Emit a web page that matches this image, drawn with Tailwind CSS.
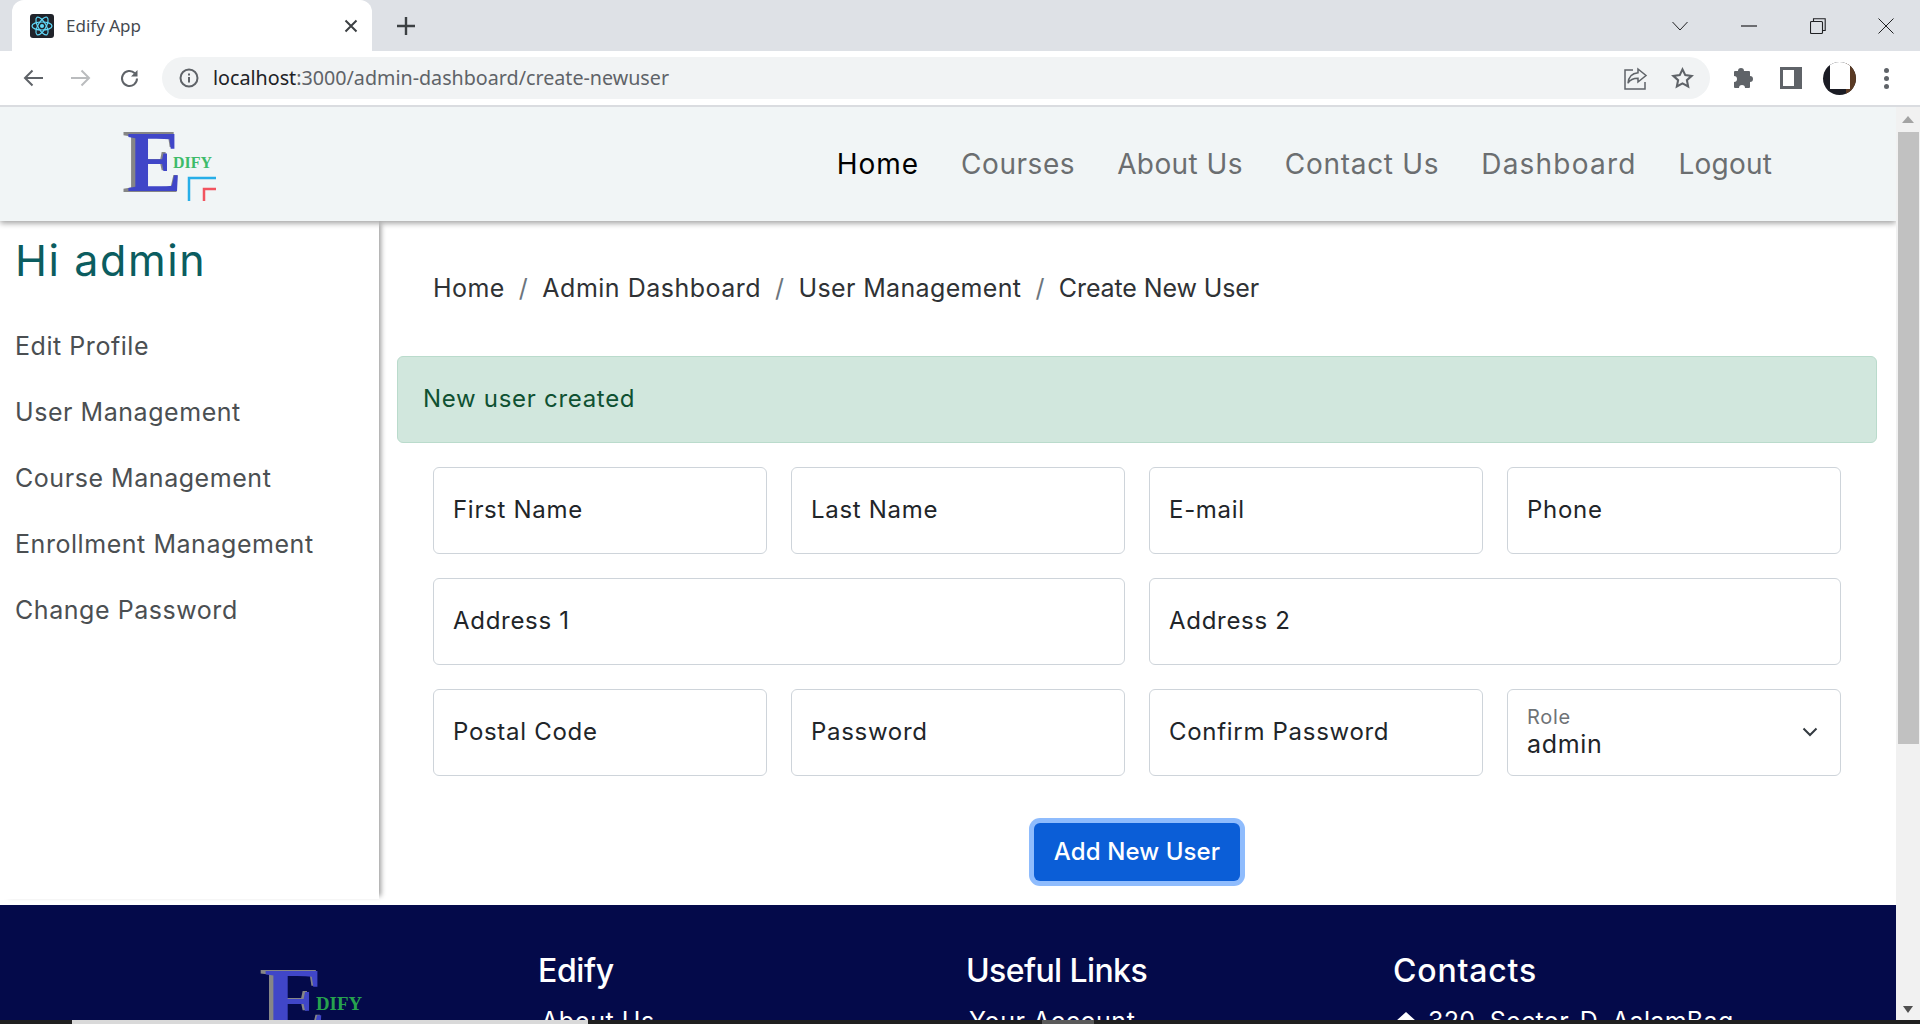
<!DOCTYPE html>
<html>
<head>
<meta charset="utf-8">
<title>Edify App</title>
<script src="https://cdn.jsdelivr.net/npm/@tailwindcss/browser@4"></script>
</head>
<body class="h-[1024px] w-[1920px] overflow-hidden bg-white font-['Inter',sans-serif]">
<div class="flex h-[1024px] flex-col overflow-hidden">
  <!-- Browser tab strip -->
  <div class="flex h-[51px] shrink-0 items-end bg-[#dee1e6] pl-[12px] font-['Noto_Sans',sans-serif]">
    <div class="flex h-[51px] w-[360px] items-center rounded-t-[12px] bg-white pl-[18px] pr-[14px]">
      <svg class="shrink-0" width="24" height="24" viewBox="0 0 24 24"><rect width="24" height="24" rx="3" fill="#20232a"/><g fill="none" stroke="#61dafb" stroke-width="1.2"><ellipse cx="12" cy="12" rx="10" ry="4"/><ellipse cx="12" cy="12" rx="10" ry="4" transform="rotate(60 12 12)"/><ellipse cx="12" cy="12" rx="10" ry="4" transform="rotate(120 12 12)"/></g><circle cx="12" cy="12" r="2" fill="#61dafb"/></svg>
      <span class="ml-[12px] flex-1 text-[17px] text-[#45494f]">Edify App</span>
      <svg width="14" height="14" viewBox="0 0 14 14" stroke="#3c4043" stroke-width="2" fill="none"><path d="M1.5 1.5l11 11M12.5 1.5l-11 11"/></svg>
    </div>
    <div class="flex h-[51px] w-[70px] items-center pl-[25px]">
      <svg width="18" height="18" viewBox="0 0 18 18" stroke="#3c4043" stroke-width="2.4" fill="none"><path d="M9 0v18M0 9h18"/></svg>
    </div>
    <div class="flex-1"></div>
    <div class="flex h-[51px] items-center">
      <div class="flex w-[68px] justify-center"><svg width="16" height="10" viewBox="0 0 16 10" stroke="#202124" fill="none"><path d="M.5 1L8 9l7.5-8"/></svg></div>
      <div class="flex w-[69px] justify-center"><svg width="16" height="2" viewBox="0 0 16 2"><path d="M0 1h16" stroke="#202124" stroke-width="1.2"/></svg></div>
      <div class="flex w-[69px] justify-center"><svg width="16" height="16" viewBox="0 0 16 16" stroke="#202124" stroke-width="1.1" fill="none"><rect x=".5" y="3.5" width="12" height="12" rx="1"/><path d="M3.5 3.5V.8h11.7v11.7h-2.7"/></svg></div>
      <div class="flex w-[68px] justify-center"><svg width="16" height="16" viewBox="0 0 16 16" stroke="#202124" stroke-width="1" fill="none"><path d="M.5.5l15 15M15.5.5l-15 15"/></svg></div>
    </div>
  </div>
  <!-- Browser toolbar -->
  <div class="flex h-[56px] shrink-0 items-center border-b-2 border-[#dadce0] bg-white font-['Noto_Sans',sans-serif]">
    <div class="flex w-[162px] items-center pl-[23px]">
      <svg width="20" height="18" viewBox="0 0 20 18" stroke="#5f6368" stroke-width="2" fill="none"><path d="M20 9H2M9.5 1.5L2 9l7.5 7.5"/></svg>
      <svg class="ml-[28px]" width="20" height="18" viewBox="0 0 20 18" stroke="#babcbe" stroke-width="2" fill="none"><path d="M0 9h18M10.500 1.500L18 9l-7.500 7.500"/></svg>
      <svg class="ml-[28px]" width="21" height="21" viewBox="0 0 21 21" stroke="#5f6368" stroke-width="2" fill="none"><path d="M18 10.500a7.500 7.500 0 1 1-2.200-5.300"/><path d="M18.500 2v6.500H12" fill="#5f6368" stroke="none"/></svg>
    </div>
    <div class="flex h-[42px] w-[1548px] items-center rounded-full bg-[#f1f3f4] pl-[17px]">
      <svg width="20" height="20" viewBox="0 0 20 20" fill="none"><circle cx="10" cy="10" r="8.500" stroke="#5f6368" stroke-width="2"/><path d="M10 9v5.500M10 5.500v2" stroke="#5f6368" stroke-width="2"/></svg>
      <span class="ml-[14px] flex-1 text-[19.700px] text-[#5f6368]"><span class="text-[#202124]">localhost</span>:3000/admin-dashboard/create-newuser</span>
      <svg class="mr-[-3px]" width="24" height="23" viewBox="0 0 24 23" fill="none" stroke="#5f6368" stroke-width="1.500"><path d="M9 3H1v19h20v-7"/><path d="M14 2l8 6.500-8 6.500v-3.800c-5 0-8 1.500-10 5 .5-6 4-10 10-10.500z"/></svg>
      <svg class="ml-[26px] mr-[16px]" width="23" height="22" viewBox="0 0 24 23" fill="none" stroke="#5f6368" stroke-width="2.200"><path d="M12 2.500l2.900 6 6.600.8-4.900 4.500 1.300 6.500L12 17.100 6.100 20.300l1.300-6.500L2.500 9.300l6.600-.8z"/></svg>
    </div>
    <svg class="ml-[23px]" width="22" height="22" viewBox="0 0 22 22" fill="#5f6368"><path d="M8 1a3 3 0 0 1 3 3h5a1 1 0 0 1 1 1v4a3 3 0 1 1 0 6v5a1 1 0 0 1-1 1h-4a3 3 0 1 0-6 0H2a1 1 0 0 1-1-1v-5a3 3 0 1 0 0-6V5a1 1 0 0 1 1-1h3a3 3 0 0 1 3-3z"/></svg>
    <svg class="ml-[25px]" width="22" height="22" viewBox="0 0 22 22"><rect width="22" height="22" fill="#5f6368"/><rect x="3" y="3" width="11" height="16" fill="#fff"/></svg>
    <div class="relative ml-[21px] h-[33px] w-[33px] overflow-hidden rounded-full bg-[#1b1c24]"><div class="absolute right-0 top-0 h-[33px] w-[10px] bg-[#5a3a24]"></div><div class="absolute left-[7px] top-0 h-[27px] w-[20px] bg-white"></div></div>
    <div class="ml-[28px] flex flex-col gap-[3px]"><span class="h-[5px] w-[5px] rounded-full bg-[#5f6368]"></span><span class="h-[5px] w-[5px] rounded-full bg-[#5f6368]"></span><span class="h-[5px] w-[5px] rounded-full bg-[#5f6368]"></span></div>
  </div>

  <!-- Viewport -->
  <div class="flex h-[913px] shrink-0">
    <div class="w-[1896px] shrink-0 overflow-hidden">
      <!-- Site nav -->
      <nav class="relative z-20 flex h-[114px] items-center justify-between bg-[#f1f5f6] pl-[122px] pr-[124px] shadow-[0_2px_6px_rgba(0,0,0,0.4)]">
        <svg class="mt-[2px]" width="96" height="74" viewBox="0 0 96 74">
          <text x="0" y="64" font-family="Liberation Serif, serif" font-weight="700" font-size="90" fill="#868686" textLength="60" lengthAdjust="spacingAndGlyphs">E</text>
          <text x="5" y="63" font-family="Liberation Serif, serif" font-weight="700" font-size="86" fill="#4046c8" textLength="55" lengthAdjust="spacingAndGlyphs">E</text>
          <text x="51" y="40" font-family="Liberation Serif, serif" font-weight="700" font-size="16.500" fill="#3dbb6a" textLength="39" lengthAdjust="spacingAndGlyphs">DIFY</text>
          <path d="M67 73V50h27" fill="none" stroke="#27aee8" stroke-width="2.500"/>
          <path d="M82 73V61h12" fill="none" stroke="#f2545f" stroke-width="2.500"/>
        </svg>
        <div class="flex items-center gap-[42px] text-[28px] tracking-[0.55px] text-[#6b6e70]">
          <a class="tracking-[1px] text-black">Home</a><a>Courses</a><a class="tracking-[0.4px]">About Us</a><a class="tracking-[0.7px]">Contact Us</a><a class="tracking-[1.2px]">Dashboard</a><a class="tracking-[0.2px]">Logout</a>
        </div>
      </nav>
      <div class="flex h-[684px]">
        <!-- Sidebar -->
        <aside class="relative z-10 h-[678px] w-[379px] shrink-0 bg-white pl-[15px] shadow-[5px_0_5px_-3px_rgba(0,0,0,0.4)]">
          <h1 class="mt-[11px] text-[43px] leading-[56px] tracking-[1.6px] text-[#0b5d60]">Hi admin</h1>
          <ul class="mt-[40px] flex flex-col gap-[30px] text-[25px] leading-[36px] tracking-[0.55px] text-[#4b4f52]">
            <li>Edit Profile</li>
            <li>User Management</li>
            <li>Course Management</li>
            <li>Enrollment Management</li>
            <li>Change Password</li>
          </ul>
        </aside>
        <!-- Main -->
        <main class="flex-1 pt-[48px]">
          <div class="flex h-[40px] items-center gap-[14px] pl-[54px] text-[25px] tracking-[0.45px] text-[#2f3235]">
            <span>Home</span><span class="text-[#6c757d]">/</span><span class="tracking-[0.5px]">Admin Dashboard</span><span class="text-[#6c757d]">/</span><span class="tracking-[0.35px]">User Management</span><span class="text-[#6c757d]">/</span><span class="tracking-[-0.12px]">Create New User</span>
          </div>
          <div class="ml-[18px] mr-[19px] mt-[47px] flex h-[87px] items-center rounded-[6px] border border-[#badbcc] bg-[#d1e7dd] pb-[2px] pl-[25px] text-[24px] tracking-[0.7px] text-[#0f5132]">New user created</div>
          <form class="mt-[24px] grid grid-cols-4 gap-x-[24px] gap-y-[24px] pl-[54px] pr-[55px] text-[24px] tracking-[0.7px] text-[#212529]">
            <div class="flex h-[87px] items-center rounded-[6px] border border-[#ced4da] pb-[2px] pl-[19px]">First Name</div>
            <div class="flex h-[87px] items-center rounded-[6px] border border-[#ced4da] pb-[2px] pl-[19px]">Last Name</div>
            <div class="flex h-[87px] items-center rounded-[6px] border border-[#ced4da] pb-[2px] pl-[19px]">E-mail</div>
            <div class="flex h-[87px] items-center rounded-[6px] border border-[#ced4da] pb-[2px] pl-[19px]">Phone</div>
            <div class="col-span-2 flex h-[87px] items-center rounded-[6px] border border-[#ced4da] pb-[2px] pl-[19px]">Address 1</div>
            <div class="col-span-2 flex h-[87px] items-center rounded-[6px] border border-[#ced4da] pb-[2px] pl-[19px]">Address 2</div>
            <div class="flex h-[87px] items-center rounded-[6px] border border-[#ced4da] pb-[2px] pl-[19px]">Postal Code</div>
            <div class="flex h-[87px] items-center rounded-[6px] border border-[#ced4da] pb-[2px] pl-[19px]">Password</div>
            <div class="flex h-[87px] items-center rounded-[6px] border border-[#ced4da] pb-[2px] pl-[19px]">Confirm Password</div>
            <div class="flex h-[87px] items-center justify-between rounded-[6px] border border-[#ced4da] pb-[2px] pl-[19px] pr-[22px]">
              <div class="flex flex-col">
                <span class="text-[20px] leading-[26px] text-[#6f7377]">Role</span>
                <span class="text-[25px] leading-[29px]">admin</span>
              </div>
              <svg width="16" height="10" viewBox="0 0 16 10" fill="none" stroke="#343a40" stroke-width="2"><path d="M1.500 1.500L8 8l6.500-6.500"/></svg>
            </div>
            <div class="col-span-4 mt-[23px] flex justify-center">
              <button type="button" class="h-[58px] w-[206px] rounded-[6px] bg-[#0b5ed7] text-[24px] font-medium tracking-[0.1px] text-white shadow-[0_0_0_5px_#8fbcfd]">Add New User</button>
            </div>
          </form>
        </main>
      </div>
      <!-- Footer -->
      <footer class="flex h-[115px] bg-[#040a4a] pl-[259px] pt-[48px] text-white">
        <svg class="mt-[10px] shrink-0" width="110" height="66" viewBox="0 0 110 66">
          <text x="0" y="70" font-family="Liberation Serif, serif" font-weight="700" font-size="96" fill="#868686" textLength="66" lengthAdjust="spacingAndGlyphs">E</text>
          <text x="5" y="69" font-family="Liberation Serif, serif" font-weight="700" font-size="93" fill="#4046c8" textLength="62" lengthAdjust="spacingAndGlyphs">E</text>
          <text x="57" y="47" font-family="Liberation Serif, serif" font-weight="700" font-size="18.500" fill="#27a24e" textLength="46" lengthAdjust="spacingAndGlyphs">DIFY</text>
          <path d="M75 62h32" fill="none" stroke="#0d5fa8" stroke-width="2"/>
        </svg>
        <div class="ml-[169px] w-[428px] shrink-0">
          <h3 class="text-[32px] font-medium leading-[36px] tracking-[-0.4px]">Edify</h3>
          <p class="ml-[3px] mt-[14px] text-[25px] leading-[36px] tracking-[0.55px]">About Us</p>
        </div>
        <div class="w-[427px] shrink-0">
          <h3 class="text-[32px] font-medium leading-[36px] tracking-[-0.6px]">Useful Links</h3>
          <p class="ml-[3px] mt-[14px] text-[25px] leading-[36px] tracking-[0.55px]">Your Account</p>
        </div>
        <div class="shrink-0">
          <h3 class="text-[32px] font-medium leading-[36px] tracking-[0.8px]">Contacts</h3>
          <p class="ml-[3px] mt-[14px] flex items-center gap-[12px] text-[25px] leading-[36px] tracking-[0.33px]">
            <svg width="20" height="18" viewBox="0 0 20 18" fill="#fff"><path d="M10 0l10 9h-3v9H3V9H0z"/></svg>
            320, Sector-D, AalamBag
          </p>
        </div>
      </footer>
    </div>
    <!-- Scrollbar -->
    <div class="flex w-[24px] shrink-0 flex-col items-center bg-[#f1f1f1]">
      <div class="flex h-[25px] items-center"><svg width="12" height="7" viewBox="0 0 12 7"><path d="M6 0l6 7H0z" fill="#a3a3a3"/></svg></div>
      <div class="h-[612px] w-[21px] bg-[#c1c1c1]"></div>
      <div class="flex-1"></div>
      <div class="flex h-[22px] items-center"><svg width="10" height="7" viewBox="0 0 10 7"><path d="M5 7L10 0H0z" fill="#505050"/></svg></div>
    </div>
  </div>
  <!-- Window bottom edge -->
  <div class="flex h-[4px] shrink-0 bg-[#202020]">
    <div class="ml-[72px] h-[4px] w-[516px] bg-[#d9d9d9]"></div>
    <div class="ml-[454px] h-[4px] w-[52px] bg-[#5a5a5a]"></div>
  </div>
</div>
</body>
</html>
